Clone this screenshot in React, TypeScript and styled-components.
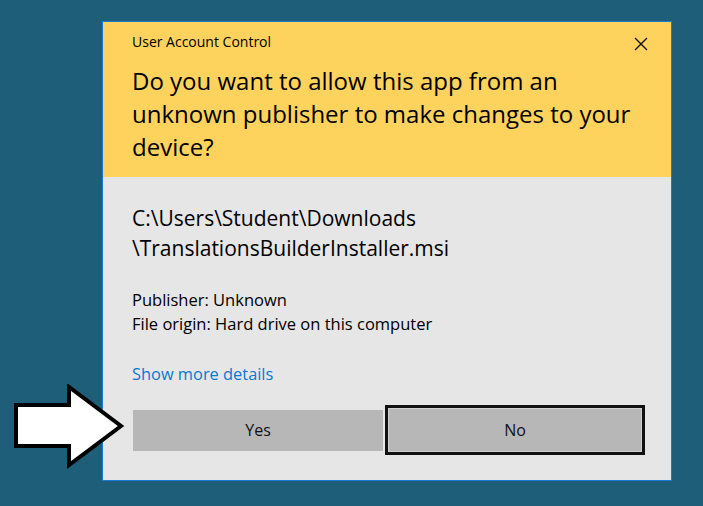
import styled, { createGlobalStyle } from 'styled-components';

const GlobalStyle = createGlobalStyle`
  html, body {
    margin: 0;
    padding: 0;
    background: #1e5e79;
    font-family: 'Open Sans', 'Noto Sans', sans-serif;
  }
`;

const Page = styled.main`
  position: relative;
  width: 703px;
  height: 506px;
  padding: 21px 0 0 102px;
  box-sizing: border-box;
  overflow: hidden;
`;

const Dialog = styled.section`
  width: 570px;
  height: 460px;
  box-sizing: border-box;
  border: 1px solid #1979d3;
  background: #e6e6e6;
  display: flex;
  flex-direction: column;
`;

const Header = styled.header`
  position: relative;
  height: 155px;
  box-sizing: border-box;
  background: #fed35d;
  padding: 10px 20px 0 29px;
  color: #000;
`;

const Caption = styled.div`
  font-size: 14px;
  line-height: 20px;
`;

const CloseButton = styled.button`
  position: absolute;
  top: 12px;
  right: 20px;
  width: 20px;
  height: 20px;
  padding: 0;
  border: none;
  background: transparent;
  display: flex;
  align-items: center;
  justify-content: center;
`;

const Question = styled.h1`
  margin: 12px 0 0;
  font-weight: 400;
  font-size: 24px;
  line-height: 33px;
`;

const Body = styled.div`
  flex: 1;
  padding: 26px 26px 0 29px;
  display: flex;
  flex-direction: column;
  color: #000;
`;

const FilePath = styled.div`
  font-size: 21px;
  line-height: 30px;
`;

const Meta = styled.div`
  margin-top: 25px;
  font-size: 16.5px;
  line-height: 24px;
`;

const DetailsLink = styled.a`
  align-self: flex-start;
  margin-top: 26px;
  font-size: 16.4px;
  line-height: 24px;
  color: #0a78d2;
  text-decoration: none;
`;

const Buttons = styled.div`
  margin-top: 19px;
  display: grid;
  grid-template-columns: 251px 260px;
  gap: 2px;
  align-items: center;
`;

const Button = styled.button<{ $focused?: boolean }>`
  height: ${({ $focused }) => ($focused ? '50px' : '41px')};
  margin-left: ${({ $focused }) => ($focused ? '0' : '1px')};
  box-sizing: border-box;
  background: #b7b7b7;
  border: ${({ $focused }) => ($focused ? '3px solid #111' : 'none')};
  box-shadow: ${({ $focused }) => ($focused ? 'inset 0 0 0 1px #d0d0d0' : 'none')};
  font-family: inherit;
  font-size: 16px;
  color: #111;
  padding: 0;
`;

const Arrow = styled.svg`
  position: absolute;
  left: 13px;
  top: 384px;
`;

export default function App() {
  return (
    <>
      <GlobalStyle />
      <Page>
        <Dialog>
          <Header>
            <Caption>User Account Control</Caption>
            <CloseButton aria-label="Close">
              <svg width="14" height="14" viewBox="0 0 14 14">
                <path d="M1 1 L13 13 M13 1 L1 13" stroke="#111" strokeWidth="1.4" />
              </svg>
            </CloseButton>
            <Question>
              Do you want to allow this app from an unknown publisher to make changes to your device?
            </Question>
          </Header>
          <Body>
            <FilePath>
              C:\Users\Student\Downloads
              <br />
              \TranslationsBuilderInstaller.msi
            </FilePath>
            <Meta>
              Publisher: Unknown
              <br />
              File origin: Hard drive on this computer
            </Meta>
            <DetailsLink href="#">Show more details</DetailsLink>
            <Buttons>
              <Button>Yes</Button>
              <Button $focused>No</Button>
            </Buttons>
          </Body>
        </Dialog>
        <Arrow width="112" height="86" viewBox="0 0 112 86">
          <polygon
            points="3,21 56,21 56,3 108,42 56,81 56,62 3,62"
            fill="#fff"
            stroke="#000"
            strokeWidth="4"
            strokeLinejoin="miter"
          />
        </Arrow>
      </Page>
    </>
  );
}
